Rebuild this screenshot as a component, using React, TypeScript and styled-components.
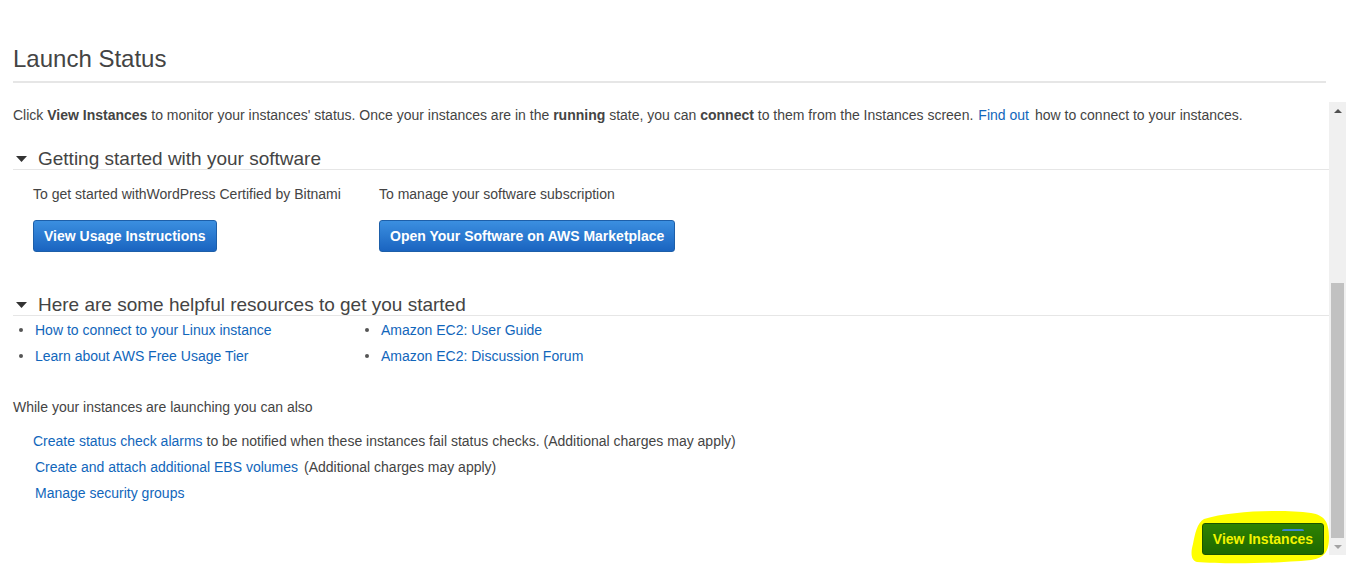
import React from "react";
import styled, { createGlobalStyle } from "styled-components";

const GlobalStyle = createGlobalStyle`
  html, body { margin: 0; padding: 0; background: #ffffff; }
  body {
    font-family: "Liberation Sans", Arial, sans-serif;
    font-size: 14px;
    color: #444444;
  }
  * { box-sizing: border-box; }
`;

const Page = styled.div`
  padding: 0 14px 0 13px;
  width: 1360px;
  height: 565px;
  overflow: hidden;
`;

const TitleBlock = styled.div`
  margin: 45px 20px 0 0;
  padding-bottom: 8px;
  border-bottom: 2px solid #e6e6e6;
`;

const Title = styled.h1`
  margin: 0;
  font-size: 24px;
  line-height: 28px;
  font-weight: normal;
  color: #444444;
`;

const ScrollArea = styled.div`
  margin-top: 19px;
  height: 453px;
  display: flex;
`;

const Content = styled.div`
  flex: 1;
  padding-top: 3px;
  display: flex;
  flex-direction: column;
`;

const Paragraph = styled.p`
  margin: 0;
  line-height: 20px;
`;

const Link = styled.a<{ $gap?: boolean }>`
  color: #1166bb;
  text-decoration: none;
  cursor: pointer;
  margin: ${(p) => (p.$gap ? "0 6px 0 5px" : "0")};
`;

const SectionHeader = styled.div<{ $top: number }>`
  margin-top: ${(p) => p.$top}px;
  display: flex;
  align-items: center;
  height: 23px;
  padding-top: 1px;
  border-bottom: 1px solid #e6e6e6;
  font-size: 19px;
  line-height: 21px;
  color: #444444;
`;

const Caret = styled.svg`
  width: 11px;
  height: 6px;
  margin: 0 11px 0 3px;
  flex: none;
`;

const SoftwareGrid = styled.div`
  display: grid;
  grid-template-columns: 346px auto;
  padding-left: 20px;
  margin-top: 14px;
`;

const SoftwareCol = styled.div`
  display: flex;
  flex-direction: column;
  align-items: flex-start;
`;

const SoftwareText = styled.div`
  line-height: 20px;
  margin-bottom: 16px;
`;

const BlueButton = styled.button`
  height: 32px;
  padding: 0 10px;
  border: 1px solid #1d5fa9;
  border-radius: 3px;
  background: linear-gradient(#3b8fe0, #1a64c0);
  color: #ffffff;
  font-family: "Liberation Sans", Arial, sans-serif;
  font-size: 14px;
  font-weight: bold;
  cursor: pointer;
`;

const ResourceGrid = styled.div`
  display: grid;
  grid-template-columns: 346px auto;
  margin-top: 4px;
`;

const ResourceList = styled.ul`
  margin: 0;
  padding: 0;
  list-style: none;
`;

const ResourceItem = styled.li`
  display: flex;
  align-items: center;
  line-height: 20px;
  margin-bottom: 6px;
  padding-left: 6px;
  &::before {
    content: "";
    width: 4px;
    height: 4px;
    border-radius: 50%;
    background: #555555;
    margin-right: 12px;
    flex: none;
  }
`;

const AlsoTitle = styled.div`
  margin-top: 25px;
  line-height: 20px;
`;

const ActionList = styled.div`
  margin-top: 14px;
  display: flex;
  flex-direction: column;
  gap: 6px;
`;

const ActionRow = styled.div<{ $indent: number }>`
  padding-left: ${(p) => p.$indent}px;
  line-height: 20px;
`;

const Note = styled.span`
  margin-left: 6px;
`;

const Footer = styled.div`
  margin-top: 20px;
  display: flex;
  justify-content: flex-end;
  padding-right: 5px;
`;

const HighlightWrap = styled.div`
  position: relative;
`;

const Highlight = styled.svg`
  position: absolute;
  left: -12px;
  top: -13px;
  width: 140px;
  height: 54px;
  z-index: 0;
`;

const GreenButton = styled.button`
  position: relative;
  z-index: 1;
  height: 32px;
  padding: 0 10px;
  border: 1px solid #1b5400;
  border-radius: 3px;
  background: linear-gradient(#2e8202, #1e6800);
  color: #f4f400;
  font-family: "Liberation Sans", Arial, sans-serif;
  font-size: 14px;
  font-weight: bold;
  cursor: pointer;
`;

const BlueTrace = styled.span`
  position: absolute;
  top: 6px;
  right: 20px;
  width: 22px;
  height: 2px;
  border-radius: 2px 2px 0 0;
  background: #3a86d6;
  z-index: 2;
`;

const Scrollbar = styled.div`
  width: 17px;
  flex: none;
  display: flex;
  flex-direction: column;
  background: #f0f0f0;
`;

const ScrollButton = styled.div`
  height: 17px;
  display: flex;
  align-items: center;
  justify-content: center;
  flex: none;
`;

const Arrow = styled.svg`
  width: 8px;
  height: 4px;
`;

const TrackSpace = styled.div`
  flex: 1;
`;

const Thumb = styled.div`
  height: 255px;
  margin: 0 2px;
  background: #c1c1c1;
  flex: none;
`;

const CaretIcon = () => (
  <Caret viewBox="0 0 11 6">
    <polygon points="0,0 11,0 5.5,6" fill="#333333" />
  </Caret>
);

export default function App() {
  return (
    <>
      <GlobalStyle />
      <Page>
        <TitleBlock>
          <Title>Launch Status</Title>
        </TitleBlock>
        <ScrollArea>
          <Content>
            <Paragraph>
              Click <b>View Instances</b> to monitor your instances' status. Once your
              instances are in the <b>running</b> state, you can <b>connect</b> to them
              from the Instances screen.<Link $gap>Find out</Link>how to connect to your
              instances.
            </Paragraph>

            <SectionHeader $top={22}>
              <CaretIcon />
              Getting started with your software
            </SectionHeader>
            <SoftwareGrid>
              <SoftwareCol>
                <SoftwareText>To get started withWordPress Certified by Bitnami</SoftwareText>
                <BlueButton>View Usage Instructions</BlueButton>
              </SoftwareCol>
              <SoftwareCol>
                <SoftwareText>To manage your software subscription</SoftwareText>
                <BlueButton>Open Your Software on AWS Marketplace</BlueButton>
              </SoftwareCol>
            </SoftwareGrid>

            <SectionHeader $top={41}>
              <CaretIcon />
              Here are some helpful resources to get you started
            </SectionHeader>
            <ResourceGrid>
              <ResourceList>
                <ResourceItem>
                  <Link>How to connect to your Linux instance</Link>
                </ResourceItem>
                <ResourceItem>
                  <Link>Learn about AWS Free Usage Tier</Link>
                </ResourceItem>
              </ResourceList>
              <ResourceList>
                <ResourceItem>
                  <Link>Amazon EC2: User Guide</Link>
                </ResourceItem>
                <ResourceItem>
                  <Link>Amazon EC2: Discussion Forum</Link>
                </ResourceItem>
              </ResourceList>
            </ResourceGrid>

            <AlsoTitle>While your instances are launching you can also</AlsoTitle>
            <ActionList>
              <ActionRow $indent={20}>
                <Link>Create status check alarms</Link> to be notified when these
                instances fail status checks. (Additional charges may apply)
              </ActionRow>
              <ActionRow $indent={22}>
                <Link>Create and attach additional EBS volumes</Link>
                <Note>(Additional charges may apply)</Note>
              </ActionRow>
              <ActionRow $indent={22}>
                <Link>Manage security groups</Link>
              </ActionRow>
            </ActionList>

            <Footer>
              <HighlightWrap>
                <Highlight viewBox="0 0 140 54">
                  <path
                    d="M 14 9 C 40 1, 90 -1, 121 3 C 135 5, 139 13, 139 27 C 139 41, 135 48, 121 50 C 80 54, 30 54, 7 52 C 0 50, 1 41, 3 34 C 5 24, 7 13, 14 9 Z"
                    fill="#ffff00"
                  />
                </Highlight>
                <GreenButton>View Instances</GreenButton>
                <BlueTrace />
              </HighlightWrap>
            </Footer>
          </Content>

          <Scrollbar>
            <ScrollButton>
              <Arrow viewBox="0 0 8 4">
                <polygon points="0,4 8,4 4,0" fill="#505050" />
              </Arrow>
            </ScrollButton>
            <TrackSpace />
            <Thumb />
            <ScrollButton>
              <Arrow viewBox="0 0 8 4">
                <polygon points="0,0 8,0 4,4" fill="#a3a3a3" />
              </Arrow>
            </ScrollButton>
          </Scrollbar>
        </ScrollArea>
      </Page>
    </>
  );
}
